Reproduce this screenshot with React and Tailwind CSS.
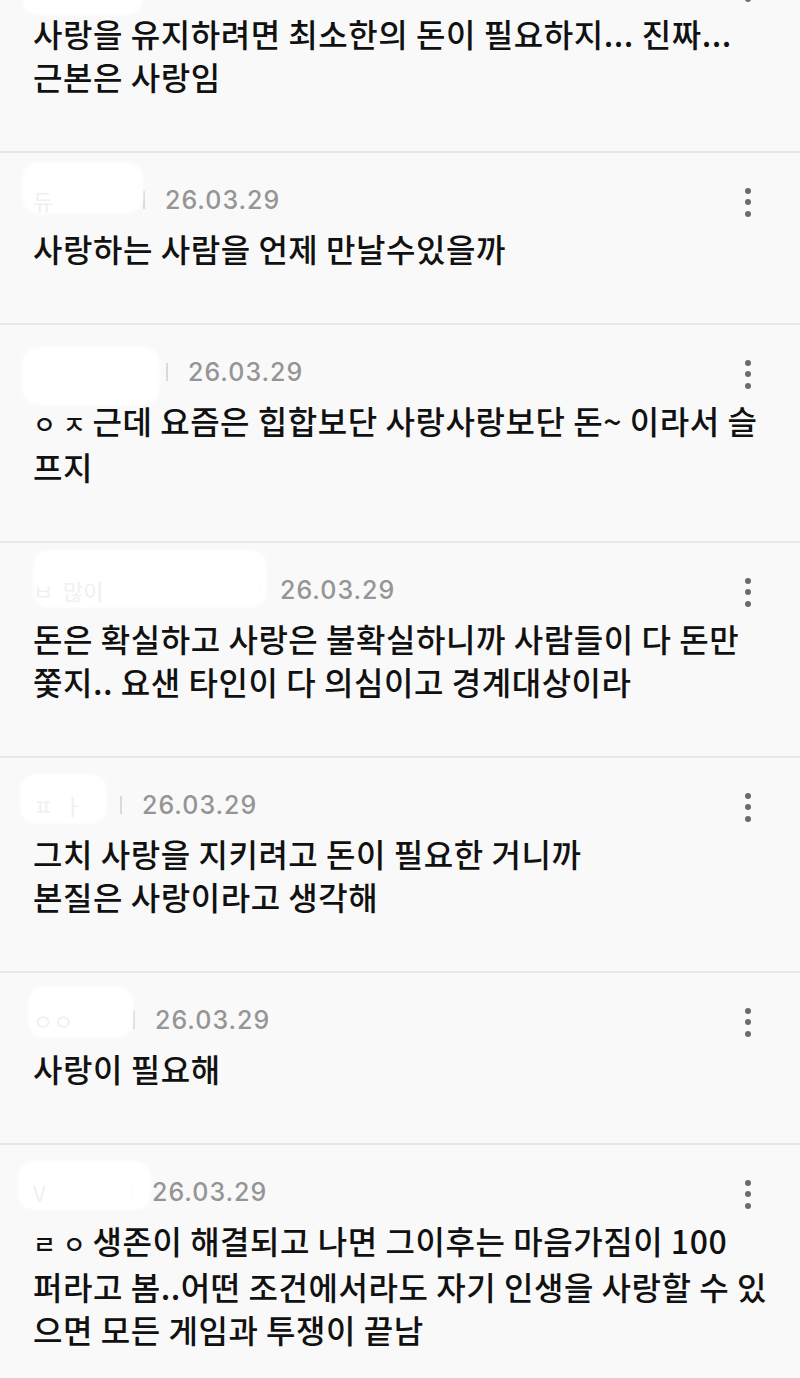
import React from 'react';

const comments = [
  {
    slot: 'w-[100px]',
    blob: 'left-[-11px] top-[-23px] w-[121px] h-[53px]',
    faint: '',
    lines: [
      [{ t: '사랑을 유지하려면 최소한의 돈이 필요하지... 진짜...' }],
      [{ t: '근본은 사랑임' }],
    ],
  },
  {
    slot: 'w-[100px]',
    blob: 'left-[-11px] top-[-23px] w-[121px] h-[52px]',
    faint: '듀',
    lines: [[{ t: '사랑하는 사람을 언제 만날수있을까' }]],
  },
  {
    slot: 'w-[123px]',
    blob: 'left-[-11px] top-[-25px] w-[138px] h-[58px]',
    faint: '',
    lines: [
      [{ t: 'ㅇ ㅈ ', small: true }, { t: '근데 요즘은 힙합보단 사랑사랑보단 돈~ 이라서 슬' }],
      [{ t: '프지' }],
    ],
  },
  {
    slot: 'w-[215px]',
    blob: 'left-[0px] top-[-25px] w-[234px] h-[58px]',
    faint: 'ㅂ  많이',
    lines: [
      [{ t: '돈은 확실하고 사랑은 불확실하니까 사람들이 다 돈만' }],
      [{ t: '쫓지.. 요샌 타인이 다 의심이고 경계대상이라' }],
    ],
  },
  {
    slot: 'w-[77px]',
    blob: 'left-[-13px] top-[-16px] w-[87px] h-[50px]',
    faint: 'ㅍ  ㅏ',
    lines: [
      [{ t: '그치 사랑을 지키려고 돈이 필요한 거니까' }],
      [{ t: '본질은 사랑이라고 생각해' }],
    ],
  },
  {
    slot: 'w-[90px]',
    blob: 'left-[-5px] top-[-19px] w-[105px] h-[52px]',
    faint: 'ㅇㅇ',
    lines: [[{ t: '사랑이 필요해' }]],
  },
  {
    slot: 'w-[87px]',
    blob: 'left-[-15px] top-[-16px] w-[133px] h-[49px]',
    faint: 'V',
    lines: [
      [{ t: 'ㄹ ㅇ ', small: true }, { t: '생존이 해결되고 나면 그이후는 마음가짐이 100' }],
      [{ t: '퍼라고 봄..어떤 조건에서라도 자기 인생을 사랑할 수 있' }],
      [{ t: '으면 모든 게임과 투쟁이 끝남' }],
    ],
  },
];

function Kebab() {
  return (
    <div className="flex flex-col items-center gap-[5.5px] mt-1">
      <span className="w-[6px] h-[6px] rounded-full bg-[#6b6b6b]" />
      <span className="w-[6px] h-[6px] rounded-full bg-[#6b6b6b]" />
      <span className="w-[6px] h-[6px] rounded-full bg-[#6b6b6b]" />
    </div>
  );
}

function Comment({ c, last }) {
  return (
    <div className={last ? '' : 'border-b-2 border-[#e7e7e7]'}>
      <div className="pt-[32px] pb-[53px] pl-[33px] pr-[49px]">
        <div className="h-[30px] flex items-center justify-between">
          <div className="flex items-center">
            <div className={`relative h-full shrink-0 ${c.slot}`}>
              <div className={`absolute bg-white/95 rounded-2xl blur-[1.5px] ${c.blob}`} />
              <span className="relative text-[22px] leading-[30px] text-[#f0f0f0] whitespace-pre">{c.faint}</span>
            </div>
            <span className="ml-[10px] mr-[20px] w-[2px] h-[18px] bg-[#dadada]" />
            <span className="text-[25px] leading-none font-medium tracking-[0.04em] text-[#959595] font-['Inter',sans-serif]">
              26.03.29
            </span>
          </div>
          <Kebab />
        </div>
        <div className="mt-3 text-[32px] leading-[43px] font-medium tracking-[0.017em] text-[#111]">
          {c.lines.map((line, i) => (
            <div key={i} className="whitespace-nowrap">
              {line.map((seg, j) => (
                <span key={j} className={seg.small ? 'text-[25px]' : ''}>
                  {seg.t}
                </span>
              ))}
            </div>
          ))}
        </div>
      </div>
    </div>
  );
}

export default function App() {
  return (
    <div className="w-[800px] h-[1378px] overflow-hidden bg-[#f9f9f9] font-['Noto_Sans_CJK_KR','Noto_Sans',sans-serif]">
      <div className="-mt-[62px]">
        {comments.map((c, i) => (
          <Comment key={i} c={c} last={i === comments.length - 1} />
        ))}
      </div>
    </div>
  );
}
